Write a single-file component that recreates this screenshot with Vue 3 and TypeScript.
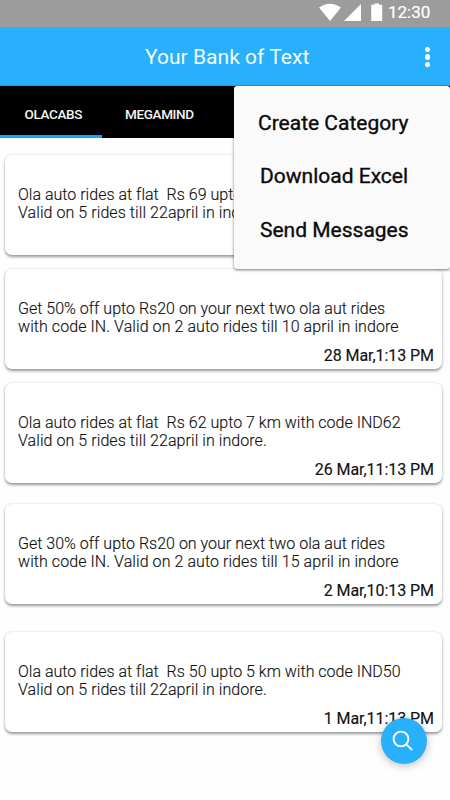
<script setup lang="ts">
interface Message {
  id: number
  lines: string[]
  time: string
  spacing: 'tight' | 'medium' | 'wide' | 'none'
}

const tabs = [
  { name: 'OLACABS', active: true },
  { name: 'MEGAMIND', active: false },
]

const menuItems = [
  { label: 'Create Category', key: 'create' },
  { label: 'Download Excel', key: 'download' },
  { label: 'Send Messages', key: 'send' },
]

const messages: Message[] = [
  { id: 1, lines: ['Ola auto rides at flat  Rs 69 upto', 'Valid on 5 rides till 22april in indore.'], time: '', spacing: 'none' },
  { id: 2, lines: ['Get 50% off upto Rs20 on your next two ola aut rides', 'with code IN. Valid on 2 auto rides till 10 april in indore'], time: '28 Mar,1:13 PM', spacing: 'tight' },
  { id: 3, lines: ['Ola auto rides at flat  Rs 62 upto 7 km with code IND62', 'Valid on 5 rides till 22april in indore.'], time: '26 Mar,11:13 PM', spacing: 'tight' },
  { id: 4, lines: ['Get 30% off upto Rs20 on your next two ola aut rides', 'with code IN. Valid on 2 auto rides till 15 april in indore'], time: '2 Mar,10:13 PM', spacing: 'medium' },
  { id: 5, lines: ['Ola auto rides at flat  Rs 50 upto 5 km with code IND50', 'Valid on 5 rides till 22april in indore.'], time: '1 Mar,11:13 PM', spacing: 'wide' },
]
</script>

<template>
  <div class="screen">
    <div class="status">
      <svg class="status-icons" width="70" height="27" viewBox="0 0 70 27">
        <path d="M0 7.6Q11 -.2 22 7.6L11 21Z" />
        <path d="M42 4V21H25Z" />
        <path d="M53.2 4.8h2.2V3.4h4.6v1.4h3.2V21H52.2V4.8Z" />
      </svg>
      <span class="clock">12:30</span>
    </div>
    <header class="appbar">
      <h1 class="title">Your Bank of Text</h1>
      <button class="more" aria-label="More options">
        <i></i><i></i><i></i>
      </button>
    </header>
    <nav class="tabs">
      <div v-for="tab in tabs" :key="tab.name" class="tab" :class="{ active: tab.active }">
        <span>{{ tab.name }}</span>
      </div>
    </nav>
    <main class="list">
      <article v-for="m in messages" :key="m.id" class="card" :class="m.spacing">
        <p v-for="line in m.lines" :key="line" class="line">{{ line }}</p>
        <time class="time">{{ m.time }}</time>
      </article>
    </main>
    <div class="menu">
      <div v-for="item in menuItems" :key="item.key" class="menu-item" :class="item.key">
        <span>{{ item.label }}</span>
      </div>
    </div>
    <button class="fab" aria-label="Search">
      <svg width="22" height="22" viewBox="0 0 22 22">
        <circle cx="9" cy="9" r="7.4" />
        <path d="M14.3 14.3L20.2 20.2" />
      </svg>
    </button>
  </div>
</template>

<style>
body {
  margin: 0;
  background: #fff;
}
</style>

<style scoped>
.screen {
  position: relative;
  width: 450px;
  height: 800px;
  overflow: hidden;
  background: #fefefe;
  font-family: Roboto, "Liberation Sans", sans-serif;
  color: #111;
}
.status {
  display: flex;
  justify-content: flex-end;
  height: 27px;
  padding-right: 20px;
  background: #9c9c9c;
  color: #fff;
}
.status-icons {
  margin-right: -1px;
  fill: #fff;
}
.clock {
  width: 42px;
  font-size: 17px;
  font-weight: 400;
  line-height: 25px;
  -webkit-text-stroke: 0.2px currentColor;
  white-space: nowrap;
}
.appbar {
  display: flex;
  align-items: center;
  height: 59px;
  box-sizing: border-box;
  background: #29b0fc;
  border-bottom: 1px solid #159ce8;
}
.title {
  flex: 1;
  margin: 0;
  padding-left: 145px;
  font-size: 21px;
  font-weight: 400;
  line-height: 58px;
  padding-top: 1px;
  letter-spacing: 0.03px;
  color: #f4fbff;
}
button {
  border: 0;
  padding: 0;
}
.more {
  display: flex;
  flex-direction: column;
  gap: 2px;
  margin: 2px 20px 0 0;
  background: none;
}
.more i {
  width: 5.4px;
  height: 5.4px;
  border-radius: 50%;
  background: #fff;
}
.tabs {
  display: flex;
  height: 52px;
  background: #000;
}
.tab {
  display: flex;
  box-sizing: border-box;
  width: 102px;
  padding-left: 24.5px;
  border-bottom: 3px solid transparent;
  color: #f4f4f4;
  font-size: 13.5px;
  font-weight: 500;
  line-height: 56px;
  letter-spacing: -0.36px;
}
.tab.active {
  border-bottom-color: #12a5fb;
}
.tab:not(.active) {
  padding-left: 23px;
}
.list {
  display: flex;
  flex-direction: column;
  padding: 17px 8px 0 5px;
}
.card {
  box-sizing: border-box;
  display: flex;
  flex-direction: column;
  height: 100px;
  padding: 30.5px 8px 0 13px;
  background: #fff;
  border-radius: 7px;
  box-shadow: 0 1.5px 3px rgba(0, 0, 0, 0.4);
}
.card.tight {
  margin-top: 14px;
}
.card.medium {
  margin-top: 21px;
}
.card.wide {
  margin-top: 28px;
}
.line {
  margin: 0;
  font-size: 16px;
  font-weight: 300;
  line-height: 18.5px;
  letter-spacing: 0.01px;
  -webkit-text-stroke: 0.15px currentColor;
  white-space: pre;
}
.line + .line {
  letter-spacing: 0.07px;
}
.time {
  margin-top: 9.5px;
  align-self: flex-end;
  font-size: 16px;
  line-height: 19px;
  letter-spacing: -0.06px;
  -webkit-text-stroke: 0.15px currentColor;
}
.menu {
  position: absolute;
  top: 86px;
  right: 0;
  width: 216px;
  height: 183px;
  box-sizing: border-box;
  padding-top: 10.5px;
  background: #fafafa;
  border-radius: 3px;
  box-shadow: 0 1px 3px rgba(0, 0, 0, 0.55);
}
.menu-item {
  height: 53.5px;
  padding-left: 26px;
  font-size: 21px;
  font-weight: 400;
  line-height: 53.5px;
  -webkit-text-stroke: 0.35px currentColor;
  color: #0b0b0b;
  white-space: nowrap;
}
.menu-item.create {
  padding-left: 24px;
}
.fab {
  position: absolute;
  left: 381px;
  top: 718px;
  display: flex;
  align-items: center;
  justify-content: center;
  width: 46px;
  height: 46px;
  border-radius: 50%;
  background: #29b0fc;
  box-shadow: 0 2px 8px rgba(0, 0, 0, 0.25);
}
.fab svg {
  margin: 0 3px 1px 0;
  fill: none;
  stroke: #fff;
  stroke-width: 1.9;
}
</style>
